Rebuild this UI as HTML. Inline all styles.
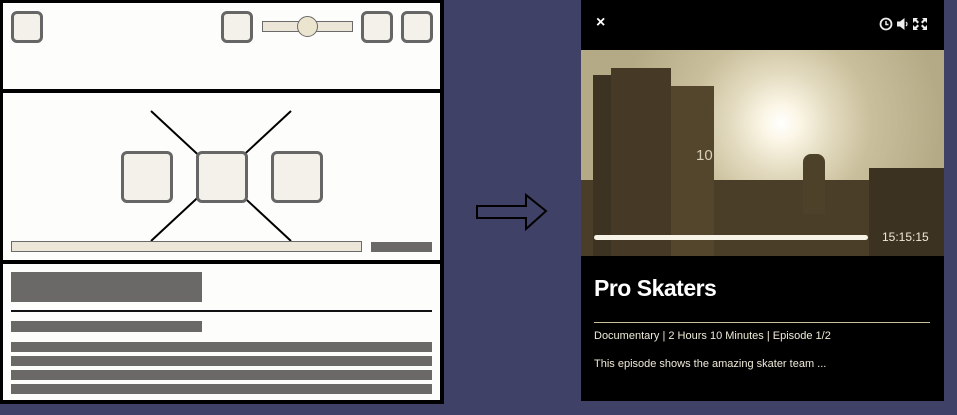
<!DOCTYPE html>
<html><head><meta charset="utf-8"><style>
body{margin:0;width:957px;height:415px;background:#3f4266;position:relative;overflow:hidden;font-family:"Liberation Sans",sans-serif}
.a{position:absolute;box-sizing:border-box}
.ic{background:#f4f1ea;border:3px solid #666;border-radius:6px}
.g{background:#6a6967}
</style></head><body>
<div class="a" style="left:0;top:0;width:444px;height:404px;background:#000"></div>
<div class="a" style="left:3px;top:3px;width:437px;height:86px;background:#fdfdfb"></div>
<div class="a" style="left:3px;top:93px;width:437px;height:167px;background:#fdfdfb"></div>
<div class="a" style="left:3px;top:264px;width:437px;height:136px;background:#fdfdfb"></div>
<div class="a ic" style="left:11px;top:11px;width:32px;height:32px"></div>
<div class="a ic" style="left:221px;top:11px;width:32px;height:32px"></div>
<div class="a" style="left:262px;top:21px;width:91px;height:11px;background:#ebe6d8;border:1px solid #6a6a6a"></div>
<div class="a" style="left:297px;top:16px;width:21px;height:21px;border-radius:50%;background:#ebe4cf;border:1px solid #6a6a6a"></div>
<div class="a ic" style="left:361px;top:11px;width:32px;height:32px"></div>
<div class="a ic" style="left:401px;top:11px;width:32px;height:32px"></div>
<svg class="a" style="left:0;top:0" width="444" height="404"><path d="M151 111L291 241M291 111L151 241" stroke="#000" stroke-width="2"/></svg>
<div class="a ic" style="left:121px;top:151px;width:52px;height:52px"></div>
<div class="a ic" style="left:196px;top:151px;width:52px;height:52px"></div>
<div class="a ic" style="left:271px;top:151px;width:52px;height:52px"></div>
<div class="a" style="left:11px;top:241px;width:351px;height:11px;background:#ebe6d8;border:1px solid #6a6a6a"></div>
<div class="a g" style="left:371px;top:242px;width:61px;height:10px"></div>
<div class="a g" style="left:11px;top:272px;width:191px;height:30px"></div>
<div class="a" style="left:11px;top:310px;width:421px;height:2px;background:#111"></div>
<div class="a g" style="left:11px;top:321px;width:191px;height:11px"></div>
<div class="a g" style="left:11px;top:342px;width:421px;height:10px"></div>
<div class="a g" style="left:11px;top:356px;width:421px;height:10px"></div>
<div class="a g" style="left:11px;top:370px;width:421px;height:10px"></div>
<div class="a g" style="left:11px;top:384px;width:421px;height:10px"></div>
<svg class="a" style="left:470px;top:190px" width="85" height="45"><path d="M7 16H56V5L76 21L56 39V28H7Z" fill="#3f4266" stroke="#000" stroke-width="2"/></svg>

<div class="a" style="left:581px;top:0;width:363px;height:401px;background:#000"></div>
<div class="a" style="left:596px;top:14px;color:#fff;font-size:16px;font-weight:bold">×</div>
<svg class="a" style="left:878px;top:16px" width="52" height="16"><circle cx="8" cy="8" r="5.5" fill="none" stroke="#eee" stroke-width="1.8"/><path d="M8 5V8.5H10.5" stroke="#eee" stroke-width="1.5" fill="none"/><path d="M19 5.5H22L26.5 2V14L22 10.5H19Z" fill="#eee"/><path d="M28 6Q30 8 28 10" stroke="#eee" stroke-width="1.2" fill="none"/><path d="M35 2h5l-1.5 1.5 2.5 2.5-1.5 1.5-2.5-2.5-2 2zM49 2h-5l1.5 1.5-2.5 2.5 1.5 1.5 2.5-2.5 2 2zM35 14h5l-1.5-1.5 2.5-2.5-1.5-1.5-2.5 2.5-2-2zM49 14h-5l1.5-1.5-2.5-2.5 1.5-1.5 2.5 2.5 2-2z" fill="#eee"/></svg>
<div class="a" style="left:581px;top:50px;width:363px;height:206px;background:radial-gradient(circle at 200px 73px,#fff 0,#fbf6e6 18px,#e3dbc0 50px,#c9bf9c 90px,#b5aa86 160px);overflow:hidden">
 <div class="a" style="left:0;top:130px;width:363px;height:76px;background:#4a3e28"></div>
 <div class="a" style="left:12px;top:25px;width:30px;height:181px;background:#3d3322"></div>
 <div class="a" style="left:30px;top:18px;width:60px;height:188px;background:#463a26"></div>
 <div class="a" style="left:90px;top:36px;width:43px;height:170px;background:#54462d"></div>
 <div class="a" style="left:288px;top:118px;width:75px;height:88px;background:#3c3222"></div>
 <div class="a" style="left:222px;top:104px;width:22px;height:60px;background:#4e4129;border-radius:8px 8px 0 0"></div>
 <div class="a" style="left:115px;top:97px;color:#d8d0b8;font-size:15px">10</div>
</div>
<div class="a" style="left:594px;top:235px;width:274px;height:5px;background:#f7f3e6;border-radius:3px"></div>
<div class="a" style="left:882px;top:230px;color:#f0ead8;font-size:12px">15:15:15</div>
<div class="a" style="left:594px;top:275px;color:#fff;font-size:23px;font-weight:bold;letter-spacing:-0.5px">Pro Skaters</div>
<div class="a" style="left:594px;top:322px;width:336px;height:1px;background:#c9bf9c"></div>
<div class="a" style="left:594px;top:330px;color:#f0ead8;font-size:11px">Documentary | 2 Hours 10 Minutes | Episode 1/2</div>
<div class="a" style="left:594px;top:358px;color:#f0ead8;font-size:11px">This episode shows the amazing skater team ...</div>
</body></html>
